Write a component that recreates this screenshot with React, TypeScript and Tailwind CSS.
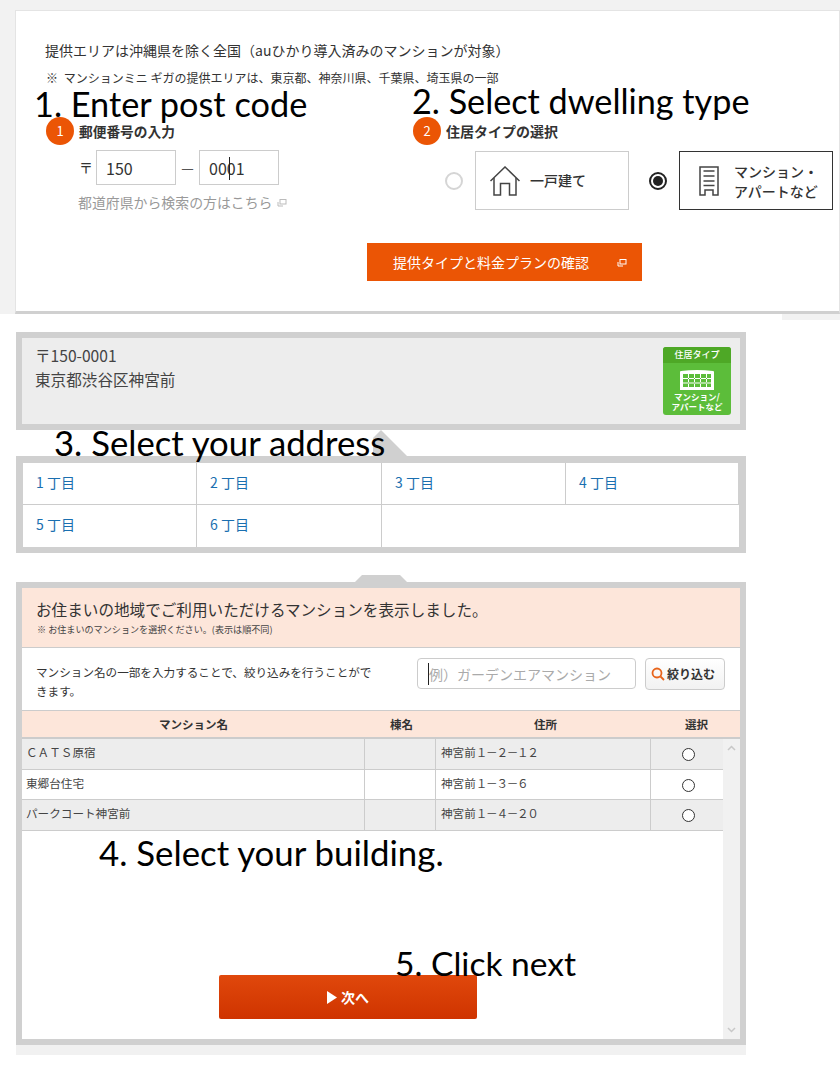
import { Fragment } from 'react';

const jp = "font-['Noto_Sans_CJK_JP','Noto_Sans',sans-serif]";
const note = "absolute font-['Lato',sans-serif] leading-[40px] text-black whitespace-nowrap";

function StepBadge({ n }: { n: number }) {
  return (
    <span className="flex h-7 w-7 shrink-0 items-center justify-center rounded-full bg-[#eb5505] text-[13px] text-white">
      {n}
    </span>
  );
}

function OpenIcon({ color }: { color: string }) {
  return (
    <svg width="10" height="9" viewBox="0 0 10 9" fill="none" stroke={color} strokeWidth="1">
      <rect x="3" y="1.5" width="6" height="4.5" />
      <path d="M1 4v4h5" />
    </svg>
  );
}

function Radio({ on }: { on: boolean }) {
  if (on) {
    return (
      <div className="flex h-[18px] w-[18px] shrink-0 items-center justify-center rounded-full border-2 border-[#222] bg-white">
        <div className="h-2.5 w-2.5 rounded-full bg-[#222]" />
      </div>
    );
  }
  return <div className="h-[18px] w-[18px] shrink-0 rounded-full border-2 border-[#d5d5d5] bg-white" />;
}

function HouseIcon() {
  return (
    <svg className="shrink-0" width="30" height="30" viewBox="0 0 30 30" fill="none" stroke="#444" strokeWidth="1.5">
      <path d="M0.5 15 15 1l14.500 14" />
      <path d="M4 12v17h6.500V17.500h9V29H26V12" />
    </svg>
  );
}

function BuildingIcon() {
  return (
    <svg className="shrink-0" width="20" height="30" viewBox="0 0 20 30" fill="none" stroke="#444" strokeWidth="1.5">
      <path d="M1 1h18v28h-5v-5H6v5H1z" />
      <path d="M4.500 5h11M4.500 10h11M4.500 15h11M4.500 19.500h11" />
    </svg>
  );
}

function TopPanel() {
  return (
    <div className="h-[314px] bg-[#f2f2f2] pl-[15px] pt-[10px]">
      <div className="h-[304px] border border-b-[3px] border-[#e4e4e4] border-b-[#d0d0d0] bg-white pl-[30px] pt-[29px] text-[#333]">
        <p className="-ml-px text-[14px] leading-5">提供エリアは沖縄県を除く全国（auひかり導入済みのマンションが対象）</p>
        <p className="mt-[8px] text-[12px] leading-5">
          <span className="mr-[3px]">※</span> マンションミニ ギガの提供エリアは、東京都、神奈川県、千葉県、埼玉県の一部
        </p>
        <div className="mt-[29px] flex">
          <div className="w-[367px]">
            <div className="flex items-center gap-[5px]">
              <StepBadge n={1} />
              <span className="text-[13.7px] font-bold">郵便番号の入力</span>
            </div>
            <div className="ml-[33px] mt-[5px] flex items-center">
              <span className="w-[17px] text-[14px]">〒</span>
              <span className="flex h-[35px] w-20 items-center border border-[#ccc] pl-[9px] text-[16px]">150</span>
              <span className="w-[23px] text-center text-[14px] text-[#555]">—</span>
              <span className="relative flex h-[35px] w-20 items-center border border-[#ccc] pl-[9px] text-[16px]">
                0001
                <span className="absolute left-[29px] top-[6px] h-[23px] w-px bg-[#222]" />
              </span>
            </div>
            <div className="ml-[32px] mt-[7px] flex items-center gap-[5px] text-[13.9px] leading-5 text-[#999]">
              都道府県から検索の方はこちら
              <OpenIcon color="#bbb" />
            </div>
          </div>
          <div>
            <div className="flex items-center gap-[5px]">
              <StepBadge n={2} />
              <span className="text-[14px] font-bold">住居タイプの選択</span>
            </div>
            <div className="mt-[6px] flex items-center">
              <div className="ml-[32px]"><Radio on={false} /></div>
              <div className="ml-3 flex h-[59px] w-[154px] shrink-0 items-center gap-[10px] border border-[#ccc] pl-[14px] text-[14px] font-medium">
                <HouseIcon />
                一戸建て
              </div>
              <div className="ml-5"><Radio on /></div>
              <div className="ml-3 flex h-[59px] w-[154px] shrink-0 items-center gap-[15px] border border-[#333] pl-[19px] text-[14px] font-medium leading-5">
                <BuildingIcon />
                <span>マンション・<br />アパートなど</span>
              </div>
            </div>
          </div>
        </div>
        <div className="ml-[321px] mt-[31px] flex h-[38px] w-[275px] items-center justify-between bg-[#eb5505] pl-[26px] pr-[15px] text-[14px] text-white">
          提供タイプと料金プランの確認
          <OpenIcon color="#fff" />
        </div>
      </div>
    </div>
  );
}

function AddressPanel() {
  return (
    <div className="ml-4 mt-3 flex h-[98px] w-[730px] justify-between border-[6px] border-[#d0d0d0] bg-[#ededed] pl-[13px] pr-[9px] pt-[5px] text-[#444]">
      <div className="text-[15.6px] leading-6">
        〒150-0001
        <br />
        東京都渋谷区神宮前
      </div>
      <div className="mt-[4px] h-[68px] w-[68px] overflow-hidden rounded-[3px] bg-[#5cbd3a] text-center font-medium text-white">
        <div className="h-4 bg-[#4ea826] text-[9px] leading-4">住居タイプ</div>
        <svg className="mx-auto mt-[7px] block" width="34" height="20" viewBox="0 0 34 20">
          <path d="M0 2q0-1 1-1 8-1 16-1t16 1q1 0 1 1v18H0z" fill="#fff" />
          <path d="M3 4h28v13H3z" fill="#5cbd3a" />
          <path d="M8 4v13h1V4zM14 4v13h1V4zM20 4v13h1V4zM26 4v13h1V4zM3 8h28v1H3zM3 12.5h28v1H3z" fill="#fff" />
        </svg>
        <div className="mt-[1px] text-[8.5px] font-bold leading-[10px]">
          マンション/
          <br />
          アパートなど
        </div>
      </div>
    </div>
  );
}

// the pasted caption hides the left half of this arrow in the reference
function Arrow() {
  return (
    <div className="ml-[355px] h-[26px] w-[52px] bg-[#d0d0d0] [clip-path:polygon(18px_8px,26px_0,100%_100%,18px_100%)]" />
  );
}

function Chome({ n }: { n: number }) {
  return (
    <span className="pb-[2px] text-[14px] text-[#1a6fb0]">
      {n} 丁目
    </span>
  );
}

function ChomePanel() {
  return (
    <div className="ml-4 w-[730px] border-x-[7px] border-b-[6px] border-t-[7px] border-[#d0d0d0] bg-white">
      <div className="flex h-[42px] border-b border-[#ccc]">
        {[1, 2, 3, 4].map((n, i) => (
          <div key={n} className={`flex items-center pl-[13px] ${i === 0 ? 'w-[174px]' : i === 1 ? 'w-[185px]' : i === 2 ? 'w-[184px]' : 'w-[173px] border-r border-[#d0d0d0]'} ${i < 3 ? 'border-r border-[#ccc]' : ''}`}>
            <Chome n={n} />
          </div>
        ))}
      </div>
      <div className="flex h-[42px]">
        {[5, 6].map((n, i) => (
          <div key={n} className={`flex items-center border-r border-[#ccc] pb-[1px] pl-[13px] ${i === 0 ? 'w-[174px]' : 'w-[185px]'}`}>
            <Chome n={n} />
          </div>
        ))}
      </div>
    </div>
  );
}

const rows = [
  { name: 'ＣＡＴＳ原宿', no: '１－２－１２', gray: true, h: 'h-[31px]' },
  { name: '東郷台住宅', no: '１－３－６', gray: false, h: 'h-[30px]' },
  { name: 'パークコート神宮前', no: '１－４－２０', gray: true, h: 'h-[31px]' },
];

function BuildingPanel() {
  return (
    <Fragment>
      <div className="ml-[355px] mt-[22px] h-[7px] w-[52px] bg-[#d0d0d0] [clip-path:polygon(7px_0,45px_0,100%_100%,0_100%)]" />
      <div className="ml-4 h-[463px] w-[730px] border-[6px] border-[#d0d0d0] bg-white text-[#333]">
        <div className="h-[60px] border-b border-[#ccc] bg-[#fde6da] pl-[14px] pt-[10px]">
          <p className="text-[15.6px] leading-[22px]">お住まいの地域でご利用いただけるマンションを表示しました。</p>
          <p className="ml-px mt-[2px] text-[9.1px] leading-[14px] text-[#444]">※ お住まいのマンションを選択ください。(表示は順不同)</p>
        </div>
        <div className="flex h-[63px] border-b border-[#ccc] pl-[14px]">
          <p className="mt-[15px] w-[340px] text-[11.6px] leading-[19px]">マンション名の一部を入力することで、絞り込みを行うことができます。</p>
          <div className="ml-[41px] mt-[10px] flex h-[31px] w-[219px] items-center rounded border border-[#ccc] pl-[10px] text-[14px] text-[#aaa]">
            <span className="border-l border-[#222] leading-[22px]">例）ガーデンエアマンション</span>
          </div>
          <div className="ml-[9px] mt-[10px] flex h-8 w-20 items-center gap-[2px] rounded border border-[#ccc] bg-gradient-to-b from-white to-[#f2f2f2] pl-[5px] text-[12px] font-bold">
            <svg width="14" height="14" viewBox="0 0 14 14" fill="none" stroke="#e8641b" strokeWidth="1.8">
              <circle cx="6" cy="6" r="4.5" />
              <path d="m9.500 9.500 3.500 3.500" />
            </svg>
            絞り込む
          </div>
        </div>
        <div className="flex h-[28px] border-b-2 border-[#ccc] bg-[#fde6da] text-center text-[11.5px] font-bold leading-[26px]">
          <div className="w-[343px]">マンション名</div>
          <div className="w-[73px]">棟名</div>
          <div className="w-[215px]">住所</div>
          <div className="w-[87px]">選択</div>
        </div>
        <div className="flex h-[300px]">
          <div className="w-[701px]">
            {rows.map(r => (
              <div key={r.name} className={`flex ${r.h} border-b border-[#ccc] text-[11.6px] leading-[26px] text-[#444] ${r.gray ? 'bg-[#ededed]' : 'bg-white'}`}>
                <div className="w-[343px] border-r border-[#ccc] pl-[4px]">{r.name}</div>
                <div className="w-[71px] border-r border-[#ccc]" />
                <div className="w-[215px] border-r border-[#ccc] pl-[5px]">
                  神宮前<span className="tracking-[-1.3px]">{r.no}</span>
                </div>
                <div className="flex flex-1 justify-center pl-[2px] pt-[9px]">
                  <span className="h-[13px] w-[13px] rounded-full border border-[#333] bg-white" />
                </div>
              </div>
            ))}
            <div className="ml-[197px] mt-[144px] flex h-[44px] w-[258px] items-center justify-center gap-[4px] rounded-[2px] bg-gradient-to-b from-[#e0480c] to-[#cf3300] text-[14px] font-bold text-white">
              <svg width="10" height="13" viewBox="0 0 10 13"><path d="M0 0l10 6.500L0 13z" fill="#fff" /></svg>
              次へ
            </div>
          </div>
          <div className="flex w-[17px] flex-col items-center justify-between bg-[#f1f1f1] py-[6px]">
            <svg width="9" height="6" viewBox="0 0 9 6" fill="none" stroke="#c8c8c8" strokeWidth="1.5"><path d="m1 5 3.500-3.500L8 5" /></svg>
            <svg width="9" height="6" viewBox="0 0 9 6" fill="none" stroke="#c8c8c8" strokeWidth="1.5"><path d="m1 1 3.500 3.500L8 1" /></svg>
          </div>
        </div>
      </div>
      <div className="ml-4 h-[10px] w-[730px] bg-[#f1f1f1]" />
    </Fragment>
  );
}

export default function App() {
  return (
    <div className={`relative h-[1073px] w-[840px] overflow-hidden bg-white ${jp}`}>
      <TopPanel />
      <div className="ml-auto h-1.5 w-[58px] bg-[#f2f2f2]" />
      <AddressPanel />
      <Arrow />
      <ChomePanel />
      <BuildingPanel />

      {/* labels pasted over the screenshot */}
      <div className={`${note} left-[34px] top-[84px] text-[34.3px]`}>1. Enter post code</div>
      <div className={`${note} left-[412px] top-[81px] text-[34.2px]`}>2. Select dwelling type</div>
      <div className={`${note} left-[54px] top-[423px] text-[34.7px]`}>3. Select your address</div>
      <div className={`${note} left-[99px] top-[833px] text-[34.8px]`}>4. Select your building.</div>
      <div className={`${note} left-[395px] top-[943px] text-[33.6px]`}>5. Click next</div>
    </div>
  );
}
